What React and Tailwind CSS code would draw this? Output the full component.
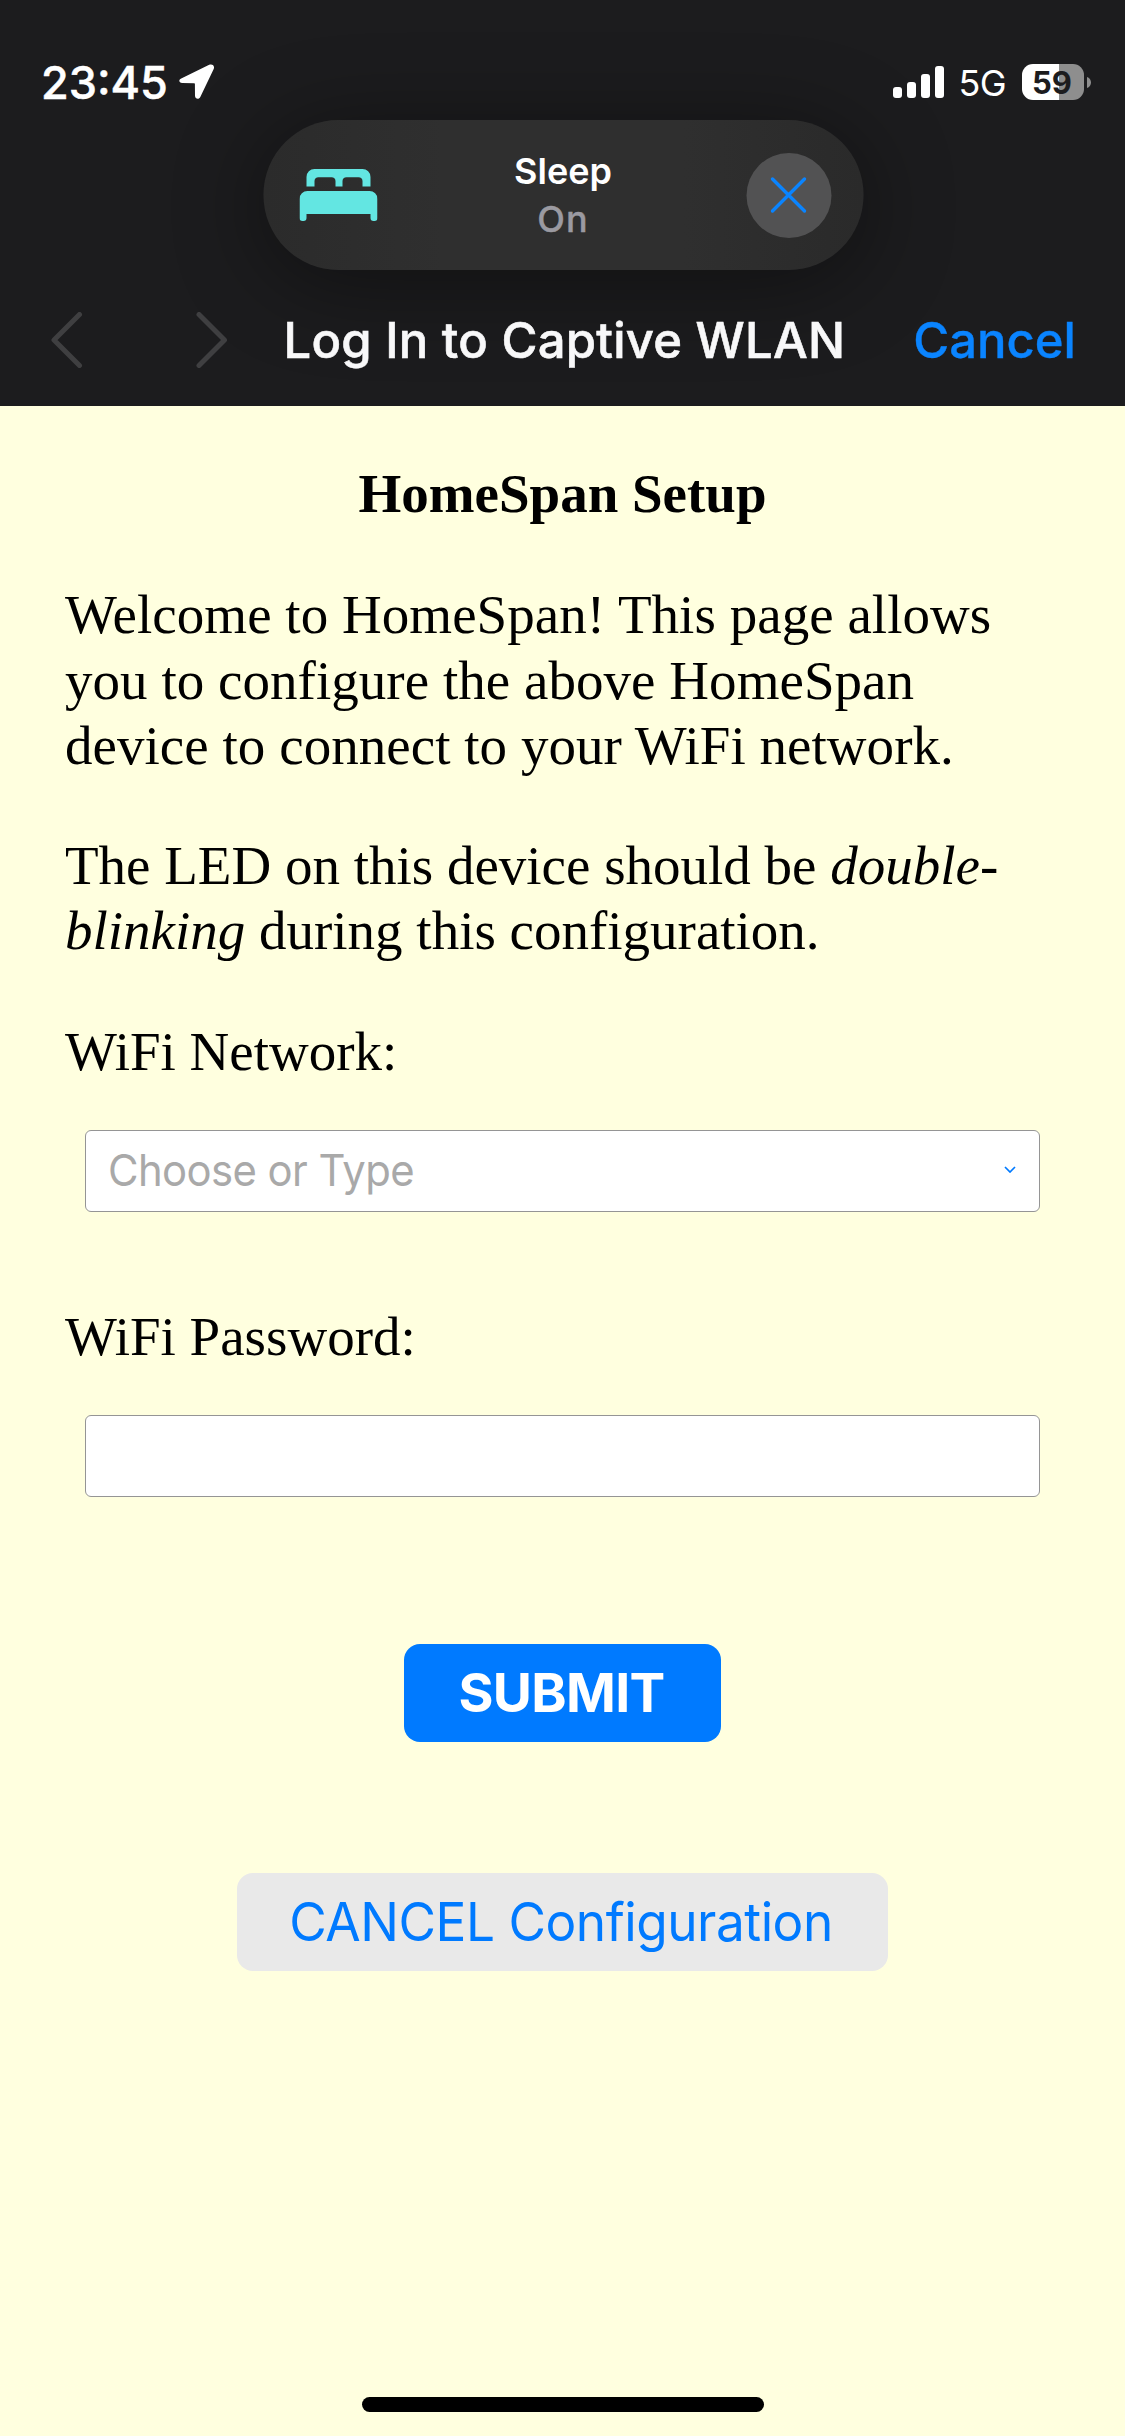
import React from "react";

function LocationArrow() {
  return (
    <svg className="ml-[11px] h-9 w-9" viewBox="0 0 36 36" fill="#fff">
      <path d="M2.2 14.4 L30.2 0.8 C33.3 -0.6 36 1.9 34.7 5 L21.3 32.9 C20 35.8 16 35 16 31.8 L15.9 19.9 C15.9 19.4 15.7 19.2 15.2 19.2 L3.2 19.1 C-0.2 19.1 -0.7 15.7 2.2 14.4 Z" />
    </svg>
  );
}

function Signal() {
  return (
    <div className="flex h-8 items-end gap-[5px]">
      <div className="h-[11px] w-[9px] rounded-[3px] bg-white" />
      <div className="h-4 w-[9px] rounded-[3px] bg-white" />
      <div className="h-6 w-[9px] rounded-[3px] bg-white" />
      <div className="h-8 w-[9px] rounded-[3px] bg-white" />
    </div>
  );
}

function Battery() {
  return (
    <div className="flex items-center">
      <div className="flex h-9 w-[62px] items-center justify-center rounded-[11px] bg-[linear-gradient(to_right,#fff_37px,#8e8e8e_37px)] pr-[2px] text-[31px] leading-none font-bold text-[#1c1c1e]">
        59
      </div>
      <svg className="ml-[3px] h-[11px] w-1" viewBox="0 0 4 11">
        <path d="M0 0 C2.4 0.8 4 2.9 4 5.5 C4 8.1 2.4 10.2 0 11 Z" fill="#8e8e8e" />
      </svg>
    </div>
  );
}

function StatusBar() {
  return (
    <div className="flex h-[120px] items-center justify-between pt-11 pr-[34px] pl-[41px] text-white">
      <div className="flex items-center">
        <span className="text-[45px] leading-none font-medium [-webkit-text-stroke:0.5px_#fff]">23:45</span>
        <LocationArrow />
      </div>
      <div className="flex items-center">
        <Signal />
        <span className="mt-[2px] mr-[16px] ml-[14px] text-[36px] leading-none tracking-[-0.6px]">5G</span>
        <Battery />
      </div>
    </div>
  );
}

function BedIcon() {
  return (
    <svg className="h-[52px] w-[78px]" viewBox="0 0 78 52" fill="#63e6e2">
      <path d="M7 17.5 V8 A8 8 0 0 1 15 0 H63 A8 8 0 0 1 71 8 V17.5 H63 V12 A4 4 0 0 0 59 8.3 H47 A4 4 0 0 0 43 12 V17.5 H36 V12 A4 4 0 0 0 32 8.3 H19 A4 4 0 0 0 15 12 V17.5 Z" />
      <path d="M0 30 A8 8 0 0 1 8 22 H70 A8 8 0 0 1 78 30 V49 A3 3 0 0 1 75 52 H74 A3 3 0 0 1 71 49 V45 H7 V49 A3 3 0 0 1 4 52 H3 A3 3 0 0 1 0 49 Z" />
    </svg>
  );
}

function SleepPill() {
  return (
    <div className="relative z-10 mx-auto flex h-[150px] w-[600px] translate-x-[0.5px] items-center justify-between rounded-full bg-[linear-gradient(to_right,#2b2b2b,#2f2f2f_30%,#2f2f2f_70%,#2a2a2a)] pr-8 pl-9 shadow-[0_12px_90px_rgba(0,0,0,0.42)]">
      <BedIcon />
      <div className="mr-[-3px] text-center text-[36px] leading-[48px]">
        <div className="font-semibold text-white">Sleep</div>
        <div className="font-medium tracking-[1px] text-[#9b9aa1] [-webkit-text-stroke:0.4px_#9b9aa1]">On</div>
      </div>
      <div className="flex size-[85px] items-center justify-center rounded-full bg-[#525253]">
        <svg className="size-9" viewBox="0 0 36 36" stroke="#0a84ff" strokeWidth="3.4" strokeLinecap="round">
          <path d="M2 2 L34 34 M34 2 L2 34" />
        </svg>
      </div>
    </div>
  );
}

function NavChevron({ d, className }) {
  return (
    <svg className={className} viewBox="0 0 32 56" fill="none" stroke="#3f3f41" strokeWidth="5" strokeLinecap="round" strokeLinejoin="round">
      <path d={d} />
    </svg>
  );
}

function NavBar() {
  return (
    <div className="flex h-[136px] items-center pt-1 pl-[51px] text-[49px] leading-none">
      <NavChevron className="h-14 w-8" d="M28.5 2.5 L3 28 L28.5 53.5" />
      <NavChevron className="ml-[113px] h-14 w-8" d="M3 2.5 L28.5 28 L3 53.5" />
      <h1 className="relative z-20 ml-[55.5px] font-medium tracking-[0.25px] whitespace-nowrap text-[#f8f8f9] [-webkit-text-stroke:0.6px_#f8f8f9]">
        Log In to Captive WLAN
      </h1>
      <span className="ml-[68px] font-medium text-[#0a84ff] [-webkit-text-stroke:0.4px_#0a84ff]">Cancel</span>
    </div>
  );
}

const fieldClass =
  "mx-[20px] mt-[46px] flex h-[82px] items-center justify-between rounded-[6px] border border-[#959595] bg-white pr-[23px] pl-[22px] font-[Inter,sans-serif]";

export default function App() {
  return (
    <div className="flex h-[2436px] w-[1125px] flex-col overflow-hidden bg-[#ffffdf] font-[Inter,sans-serif]">
      <header className="h-[406px] bg-[#1c1c1e]">
        <StatusBar />
        <SleepPill />
        <NavBar />
      </header>
      <main className="flex-1 px-[65px] pt-[55px] font-['Liberation_Serif',serif] text-[55px] leading-[65.3px] text-black">
        <h2 className="text-center font-bold">HomeSpan Setup</h2>
        <p className="mt-[56px] tracking-[0.04px]">
          Welcome to HomeSpan! This page allows
          <br />
          you to configure the above HomeSpan
          <br />
          device to connect to your WiFi network.
        </p>
        <p className="mt-[55px]">
          The LED on this device should be <em>double-</em>
          <br />
          <em>blinking</em> during this configuration.
        </p>
        <div className="mt-[55px]">WiFi Network:</div>
        <div className={fieldClass}>
          <span className="mb-[2px] origin-left scale-x-95 text-[44px] leading-none tracking-[-0.6px] text-[#a9a9a9]">
            Choose or Type
          </span>
          <svg className="mb-[3px] h-[7px] w-3" viewBox="0 0 12 7" fill="none" stroke="#007aff" strokeWidth="1.7">
            <path d="M1 1 L6 6 L11 1" />
          </svg>
        </div>
        <div className="mt-[91.7px]">WiFi Password:</div>
        <div className={fieldClass} />
        <div className="mt-[147px] flex flex-col items-center gap-[131px] font-[Inter,sans-serif] text-[53.5px] leading-none">
          <div className="flex h-[98px] w-[317px] items-center justify-center rounded-2xl bg-[#007aff] pr-[2px] font-bold tracking-[-0.7px] text-white">
            SUBMIT
          </div>
          <div className="flex h-[98px] w-[651px] items-center justify-center rounded-2xl bg-[#e9e9e9] pr-[2px] text-[#007aff]">
            <span className="scale-x-[0.96] tracking-[-0.5px] whitespace-nowrap">CANCEL Configuration</span>
          </div>
        </div>
      </main>
      <div className="mx-auto mb-6 h-[15px] w-[402px] rounded-full bg-black" />
    </div>
  );
}
